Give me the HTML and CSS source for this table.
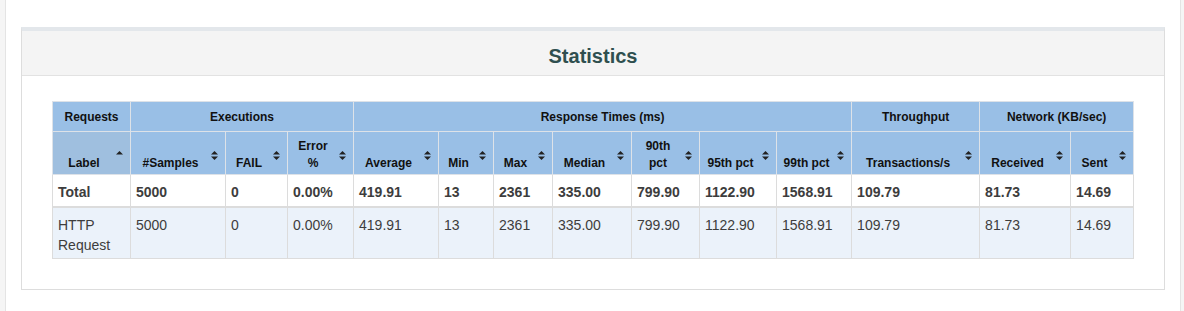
FILE: index.html
```html
<!DOCTYPE html>
<html lang="en">
<head>
<meta charset="utf-8">
<title>Statistics</title>
<link rel="stylesheet" href="styles.css">
</head>
<body>
<div class="page">
  <section class="panel">
    <div class="panel-heading"><h2 class="panel-title">Statistics</h2></div>
    <div class="panel-body">
      <table class="stats">
        <colgroup>
          <col class="w78"><col class="w95"><col class="w62"><col class="w66"><col class="w85"><col class="w55"><col class="w59"><col class="w79"><col class="w68"><col class="w77"><col class="w75"><col class="w128"><col class="w91"><col class="w63">
        </colgroup>
        <thead>
          <tr class="group-row">
            <th>Requests</th>
            <th colspan="3">Executions</th>
            <th colspan="7">Response Times (ms)</th>
            <th>Throughput</th>
            <th colspan="2">Network (KB/sec)</th>
          </tr>
          <tr class="col-row">
            <th class="sorted">Label<svg class="sort" viewBox="0 0 7 9" width="7" height="9"><polygon points="0,3.5 3.5,0 7,3.5"/></svg></th>
            <th>#Samples<svg class="sort" viewBox="0 0 7 9" width="7" height="9"><polygon points="0,3.5 3.5,0 7,3.5"/><polygon points="0,5.5 7,5.5 3.5,9"/></svg></th>
            <th>FAIL<svg class="sort" viewBox="0 0 7 9" width="7" height="9"><polygon points="0,3.5 3.5,0 7,3.5"/><polygon points="0,5.5 7,5.5 3.5,9"/></svg></th>
            <th>Error %<svg class="sort" viewBox="0 0 7 9" width="7" height="9"><polygon points="0,3.5 3.5,0 7,3.5"/><polygon points="0,5.5 7,5.5 3.5,9"/></svg></th>
            <th>Average<svg class="sort" viewBox="0 0 7 9" width="7" height="9"><polygon points="0,3.5 3.5,0 7,3.5"/><polygon points="0,5.5 7,5.5 3.5,9"/></svg></th>
            <th>Min<svg class="sort" viewBox="0 0 7 9" width="7" height="9"><polygon points="0,3.5 3.5,0 7,3.5"/><polygon points="0,5.5 7,5.5 3.5,9"/></svg></th>
            <th>Max<svg class="sort" viewBox="0 0 7 9" width="7" height="9"><polygon points="0,3.5 3.5,0 7,3.5"/><polygon points="0,5.5 7,5.5 3.5,9"/></svg></th>
            <th>Median<svg class="sort" viewBox="0 0 7 9" width="7" height="9"><polygon points="0,3.5 3.5,0 7,3.5"/><polygon points="0,5.5 7,5.5 3.5,9"/></svg></th>
            <th>90th pct<svg class="sort" viewBox="0 0 7 9" width="7" height="9"><polygon points="0,3.5 3.5,0 7,3.5"/><polygon points="0,5.5 7,5.5 3.5,9"/></svg></th>
            <th>95th pct<svg class="sort" viewBox="0 0 7 9" width="7" height="9"><polygon points="0,3.5 3.5,0 7,3.5"/><polygon points="0,5.5 7,5.5 3.5,9"/></svg></th>
            <th>99th pct<svg class="sort" viewBox="0 0 7 9" width="7" height="9"><polygon points="0,3.5 3.5,0 7,3.5"/><polygon points="0,5.5 7,5.5 3.5,9"/></svg></th>
            <th>Transactions/s<svg class="sort" viewBox="0 0 7 9" width="7" height="9"><polygon points="0,3.5 3.5,0 7,3.5"/><polygon points="0,5.5 7,5.5 3.5,9"/></svg></th>
            <th>Received<svg class="sort" viewBox="0 0 7 9" width="7" height="9"><polygon points="0,3.5 3.5,0 7,3.5"/><polygon points="0,5.5 7,5.5 3.5,9"/></svg></th>
            <th>Sent<svg class="sort" viewBox="0 0 7 9" width="7" height="9"><polygon points="0,3.5 3.5,0 7,3.5"/><polygon points="0,5.5 7,5.5 3.5,9"/></svg></th>
          </tr>
        </thead>
        <tbody>
          <tr class="total-row">
            <td>Total</td><td>5000</td><td>0</td><td>0.00%</td><td>419.91</td><td>13</td><td>2361</td><td>335.00</td><td>799.90</td><td>1122.90</td><td>1568.91</td><td>109.79</td><td>81.73</td><td>14.69</td>
          </tr>
          <tr class="odd-row">
            <td>HTTP Request</td><td>5000</td><td>0</td><td>0.00%</td><td>419.91</td><td>13</td><td>2361</td><td>335.00</td><td>799.90</td><td>1122.90</td><td>1568.91</td><td>109.79</td><td>81.73</td><td>14.69</td>
          </tr>
        </tbody>
      </table>
    </div>
  </section>
</div>
</body>
</html>
```
FILE: styles.css
```css
html, body {
  margin: 0;
  padding: 0;
}

body {
  background: #f5f5f5;
  font-family: "Liberation Sans", Arial, Helvetica, sans-serif;
  font-size: 14px;
  line-height: 20px;
  color: #333;
  padding-left: 5px;
}

.page {
  box-sizing: border-box;
  width: 1176px;
  min-height: 100vh;
  background: #fff;
  border-left: 1px solid #e4e4e4;
  border-right: 1px solid #e4e4e4;
  padding: 27px 14px 20px 15px;
}

.panel {
  box-sizing: border-box;
  width: 1144px;
  border: 1px solid #dddddd;
  border-top: 4px solid #e3e7eb;
  background: #fff;
}

.panel-heading {
  background: #f4f4f4;
  border-bottom: 1px solid #e2e2e2;
  height: 44px;
  display: flex;
  align-items: center;
  justify-content: center;
}

.panel-title {
  margin: 5px 0 0 0;
  font-size: 20px;
  line-height: 22px;
  font-weight: bold;
  color: #2f4f4f;
}

.panel-body {
  padding: 25px 30px 30px 30px;
}

.stats {
  table-layout: fixed;
  width: 1082px;
  border-collapse: collapse;
  border: 1px solid #d9d9d9;
}

.w78 { width: 78px; }
.w95 { width: 95px; }
.w62 { width: 62px; }
.w66 { width: 66px; }
.w85 { width: 85px; }
.w55 { width: 55px; }
.w59 { width: 59px; }
.w79 { width: 79px; }
.w68 { width: 68px; }
.w77 { width: 77px; }
.w75 { width: 75px; }
.w128 { width: 128px; }
.w91 { width: 91px; }
.w63 { width: 63px; }

.stats th {
  background: #99bfe6;
  color: #111;
  font-size: 12px;
  line-height: 17px;
  font-weight: bold;
  text-align: center;
  border: 1px solid #dde2e8;
  padding: 5px;
}

.group-row th {
  height: 19px;
  vertical-align: middle;
  padding-top: 6px;
  padding-bottom: 4px;
}

.col-row th {
  position: relative;
  height: 35px;
  vertical-align: bottom;
  padding-right: 20px;
  padding-bottom: 2px;
}

.col-row th.sorted {
  background: #9fbfdf;
}

.sort {
  position: absolute;
  right: 7px;
  top: 19px;
  fill: #222;
}

.stats td {
  border: 1px solid #dcdcdc;
  padding: 5px;
  vertical-align: top;
  color: #3d3d3d;
  font-size: 14px;
  line-height: 20px;
  text-align: left;
}

.total-row td {
  background: #fff;
  font-weight: bold;
  height: 20px;
  padding-top: 7px;
  padding-bottom: 4px;
  border-bottom: 2px solid #dcdcdc;
}

.odd-row td {
  background: #ebf2fa;
  height: 40px;
  padding-top: 7px;
  padding-bottom: 3px;
}
```
